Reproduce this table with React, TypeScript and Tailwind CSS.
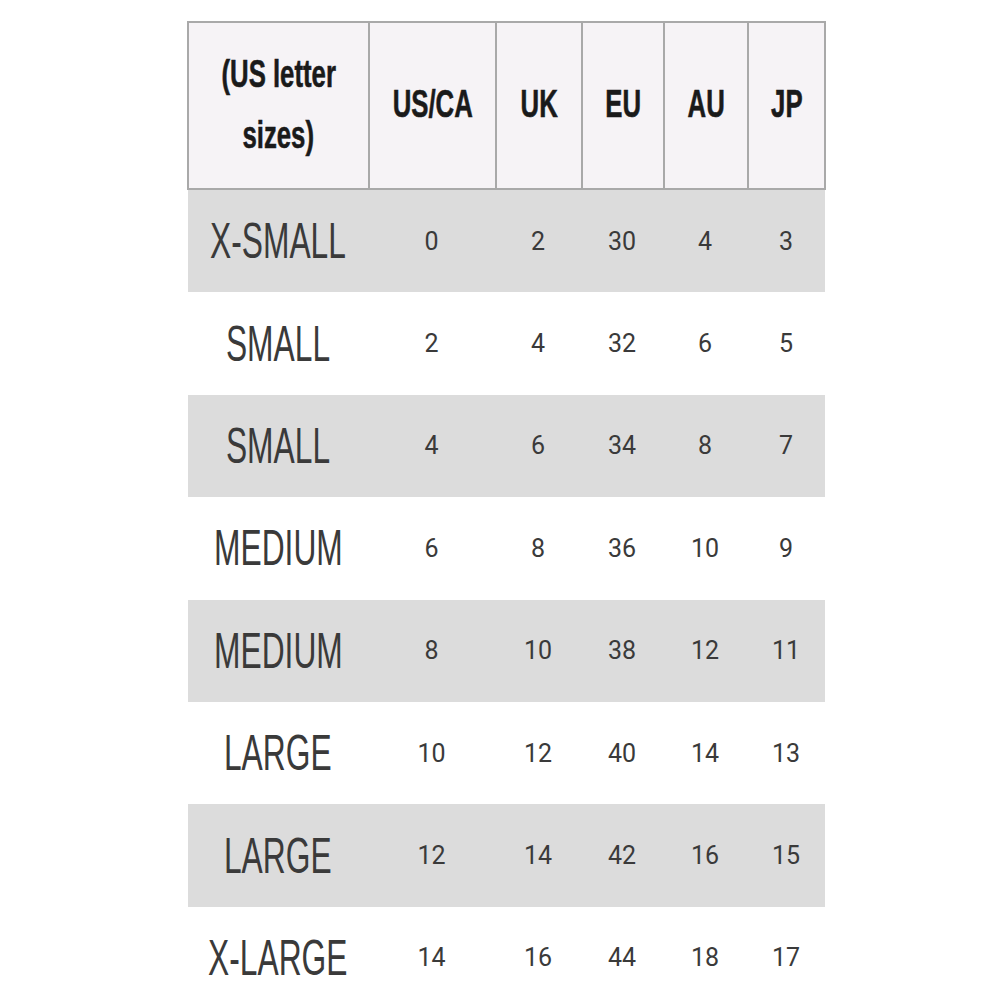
import React from "react";

type Row = {
  label: string;
  values: string[];
};

const rows: Row[] = [
  { label: "X-SMALL", values: ["0", "2", "30", "4", "3"] },
  { label: "SMALL", values: ["2", "4", "32", "6", "5"] },
  { label: "SMALL", values: ["4", "6", "34", "8", "7"] },
  { label: "MEDIUM", values: ["6", "8", "36", "10", "9"] },
  { label: "MEDIUM", values: ["8", "10", "38", "12", "11"] },
  { label: "LARGE", values: ["10", "12", "40", "14", "13"] },
  { label: "LARGE", values: ["12", "14", "42", "16", "15"] },
  { label: "X-LARGE", values: ["14", "16", "44", "18", "17"] },
];

const headers = ["US/CA", "UK", "EU", "AU", "JP"];
const widths = ["w-[127px]", "w-[86px]", "w-[82px]", "w-[84px]", "w-[78px]"];

function HeadText({ children }: { children: React.ReactNode }) {
  return (
    <span className="inline-block shrink-0 whitespace-nowrap scale-x-[0.66] font-['Liberation_Sans',sans-serif] font-bold text-[39px] leading-none text-[#1a1a1a] [-webkit-text-stroke:0.6px_#1a1a1a]">
      {children}
    </span>
  );
}

export default function App() {
  return (
    <div className="w-[1000px] h-[1000px] bg-white overflow-hidden">
      {/* header */}
      <div className="ml-[187px] mt-[21px] w-[639px] h-[169px] flex border-2 border-[#a9a9a9] bg-[#f6f3f6]">
        <div className="w-[179px] flex flex-col items-center justify-center gap-[22px] pb-1">
          <HeadText>(US letter</HeadText>
          <HeadText>sizes)</HeadText>
        </div>
        {headers.map((h, i) => (
          <div
            key={h}
            className={`${widths[i]} flex items-center justify-center border-l-2 border-[#a9a9a9] pb-1 ${i === 4 ? "flex-1" : ""}`}
          >
            <HeadText>{h}</HeadText>
          </div>
        ))}
      </div>

      {/* body */}
      <div className="ml-[188px] w-[637px]">
        {rows.map((r, idx) => (
          <div
            key={idx}
            className={`h-[102.4px] flex items-center ${idx % 2 === 0 ? "bg-[#dcdcdc]" : "bg-white"}`}
          >
            <div className="w-[180px] flex justify-center overflow-visible">
              <span className="inline-block shrink-0 whitespace-nowrap scale-x-[0.635] font-['Liberation_Sans',sans-serif] text-[50px] leading-none text-[#3a3a3a]">
                {r.label}
              </span>
            </div>
            {r.values.map((v, i) => (
              <div
                key={i}
                className={`${widths[i]} flex justify-center font-['Roboto',sans-serif] text-[25px] leading-none text-[#3a3a3a]`}
              >
                {v}
              </div>
            ))}
          </div>
        ))}
      </div>
    </div>
  );
}
